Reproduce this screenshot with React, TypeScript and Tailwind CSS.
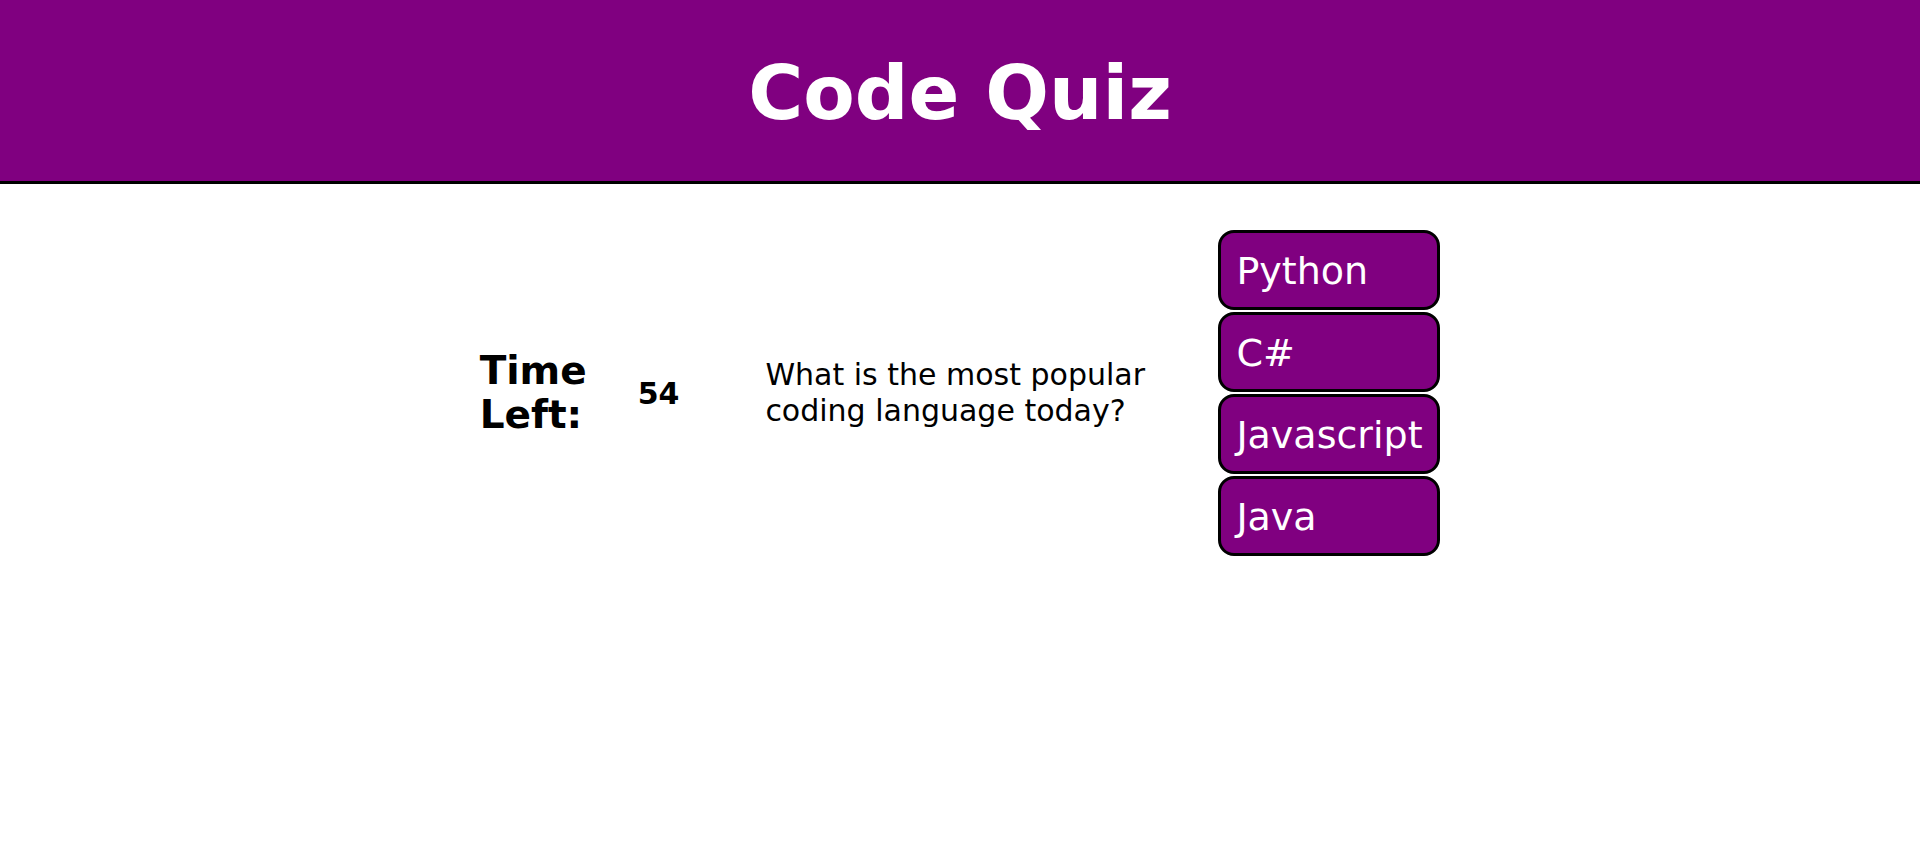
const choices = ['Python', 'C#', 'Javascript', 'Java'];

export default function App() {
  return (
    <div className="min-h-screen bg-white font-['DejaVu_Sans',Verdana,sans-serif]">
      <header className="flex h-[184px] items-center justify-center border-b-[3px] border-black bg-[#800080] pt-[5px]">
        <h1 className="text-[75px] font-bold leading-none text-white">Code Quiz</h1>
      </header>

      <main className="flex items-center justify-center pt-[46px]">
        <div className="w-[110px] text-[39px] font-bold leading-[44px] text-black">Time Left:</div>
        <div className="ml-[48px] text-[30px] font-bold text-black">54</div>
        <p className="ml-[86px] w-[400px] text-[30px] leading-[36px] text-black">
          What is the most popular coding language today?
        </p>
        <div className="ml-[53px] flex w-[222px] flex-col gap-[2px]">
          {choices.map((choice) => (
            <button
              key={choice}
              type="button"
              className="h-[80px] rounded-[16px] border-[3px] border-black bg-[#800080] pl-[15px] pt-[2px] text-left text-[38px] text-white"
            >
              {choice}
            </button>
          ))}
        </div>
      </main>
    </div>
  );
}
